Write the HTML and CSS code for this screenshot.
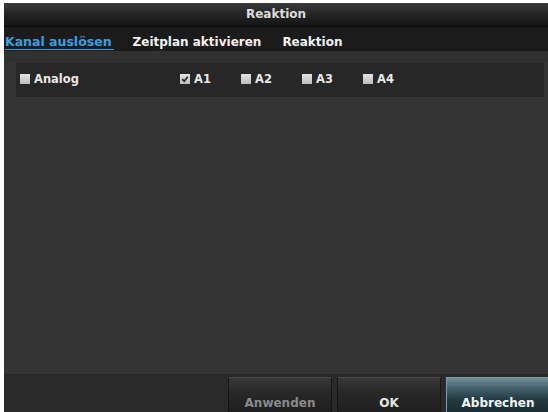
FILE: index.html
```html
<!DOCTYPE html>
<html lang="de">
<head>
<meta charset="utf-8">
<title>Reaktion</title>
<link rel="stylesheet" href="styles.css">
</head>
<body>
<div class="window">
  <div class="titlebar">Reaktion</div>
  <div class="tabs">
    <span class="tab active">Kanal auslösen</span>
    <span class="tab">Zeitplan aktivieren</span>
    <span class="tab">Reaktion</span>
  </div>
  <div class="content">
    <div class="row">
      <label class="item analog"><span class="cb"></span>Analog</label>
      <label class="item"><span class="cb checked"><svg viewBox="0 0 10 10" width="10" height="10"><path d="M2.2 5.2 L4.2 7.2 L7.8 2.8" fill="none" stroke="#2a2a2a" stroke-width="1.8"/></svg></span>A1</label>
      <label class="item"><span class="cb"></span>A2</label>
      <label class="item"><span class="cb"></span>A3</label>
      <label class="item"><span class="cb"></span>A4</label>
    </div>
  </div>
  <div class="footer">
    <button class="btn disabled">Anwenden</button>
    <button class="btn">OK</button>
    <button class="btn primary">Abbrechen</button>
  </div>
</div>
</body>
</html>
```

FILE: styles.css
```css
html, body {
  margin: 0;
  padding: 0;
  background: #ffffff;
  overflow: hidden;
}
body {
  width: 548px;
  height: 412px;
  font-family: "DejaVu Sans", "Liberation Sans", sans-serif;
  font-weight: bold;
}
.window {
  margin: 3px 0 0 4px;
  height: 409px;
  display: flex;
  flex-direction: column;
  background: #343434;
  overflow: hidden;
}
.titlebar {
  flex: 0 0 23px;
  line-height: 23px;
  text-align: center;
  font-size: 12px;
  color: #dcdcdc;
  background: linear-gradient(to bottom, #3a3a3a 0%, #262626 45%, #141414 100%);
  border-bottom: 1px solid #0a0a0a;
}
.tabs {
  flex: 0 0 24px;
  display: flex;
  align-items: flex-start;
  background: #1b1b1b;
  padding: 8px 0 0 1px;
  box-sizing: border-box;
}
.tab {
  font-size: 12px;
  line-height: 14px;
  color: #f2f2f2;
  margin-right: 21px;
}
.tab.active {
  font-size: 12.5px;
  color: #3a9ee0;
  border-bottom: 1px solid #3a9ee0;
  padding-right: 2px;
  margin-right: 19px;
}
.content {
  flex: 1;
  padding: 12px 4px 0 12px;
  background: linear-gradient(to bottom, #303030 0px, #303030 12px, #343434 12px);
}
.row {
  height: 34px;
  box-sizing: border-box;
  padding: 0 0 3px 4px;
  background: #272727;
  display: flex;
  align-items: center;
}
.item {
  display: flex;
  align-items: center;
  width: 61px;
  font-size: 11.5px;
  color: #e8e8e8;
}
.item.analog {
  width: 160px;
}
.cb {
  width: 10px;
  height: 10px;
  margin-right: 4px;
  background: linear-gradient(to bottom, #e2e2e2, #bdbdbd);
  display: flex;
}
.footer {
  flex: 0 0 38px;
  background: #2a2a2a;
  border-top: 1px solid #262626;
  display: flex;
  gap: 5px;
  padding: 2px 0 0 224px;
  box-sizing: border-box;
  overflow: hidden;
}
.btn {
  flex: 0 0 104px;
  height: 38px;
  padding: 14px 0 0;
  margin: 0;
  font-family: inherit;
  font-weight: bold;
  font-size: 12px;
  line-height: 14px;
  text-align: center;
  color: #e6e6e6;
  background: linear-gradient(to bottom, #383838 0%, #282828 40%, #1e1e1e 100%);
  border: 1px solid #161616;
  border-top-color: #484848;
  box-sizing: border-box;
  vertical-align: top;
}
.btn.disabled {
  color: #8a8a8a;
}
.btn.primary {
  color: #f4f4f4;
  background: linear-gradient(to bottom, #6f9199 0%, #48666f 25%, #233a42 60%, #182a30 100%);
  border-color: #152228;
  border-left-color: #7fa0a6;
  border-top-color: #7c9ca3;
}
```
